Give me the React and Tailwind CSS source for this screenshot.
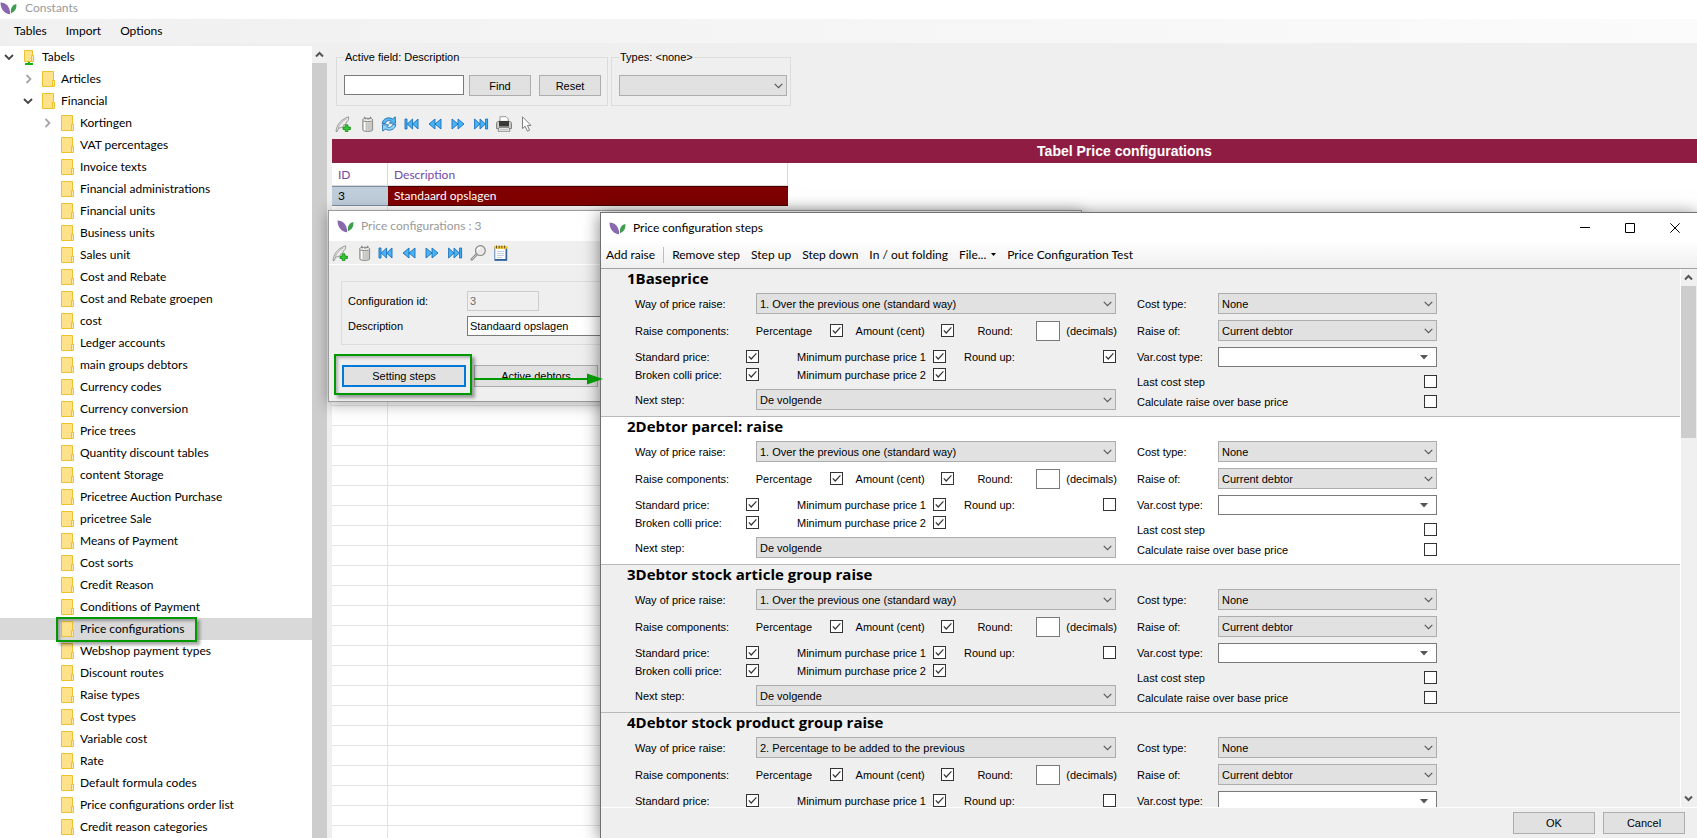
import { useState } from "react";

const FINANCIAL = [
  "Kortingen",
  "VAT percentages",
  "Invoice texts",
  "Financial administrations",
  "Financial units",
  "Business units",
  "Sales unit",
  "Cost and Rebate",
  "Cost and Rebate groepen",
  "cost",
  "Ledger accounts",
  "main groups debtors",
  "Currency codes",
  "Currency conversion",
  "Price trees",
  "Quantity discount tables",
  "content Storage",
  "Pricetree Auction Purchase",
  "pricetree Sale",
  "Means of Payment",
  "Cost sorts",
  "Credit Reason",
  "Conditions of Payment",
  "Price configurations",
  "Webshop payment types",
  "Discount routes",
  "Raise types",
  "Cost types",
  "Variable cost",
  "Rate",
  "Default formula codes",
  "Price configurations order list",
  "Credit reason categories",
];

const STANDARD_WAY = "1. Over the previous one (standard way)";

const STEPS = [
  { title: "1Baseprice", way: STANDARD_WAY, roundUp: true, bg: "bg-[#efefef]" },
  { title: "2Debtor parcel: raise", way: STANDARD_WAY, roundUp: false, bg: "bg-white" },
  { title: "3Debtor stock article group raise", way: STANDARD_WAY, roundUp: false, bg: "bg-[#efefef]" },
  { title: "4Debtor stock product group raise", way: "2. Percentage to be added to the previous", roundUp: false, bg: "bg-[#efefef]" },
];

/* ---------- icons ---------- */

function Logo() {
  return (
    <svg width="17" height="13" viewBox="0 0 17 13" className="shrink-0" aria-hidden="true">
      <path d="M0.5 0.5C6 0.8 10.2 4.5 10.2 12.3C4.5 11.8 0.6 7.5 0.5 0.5Z" fill="#8a68ae" />
      <path d="M16.3 2C12.4 3 10.2 5.8 11 11.2C14.7 9.8 16.9 6.8 16.3 2Z" fill="#3f9d4f" />
    </svg>
  );
}

function Folder() {
  return (
    <svg width="13" height="16" viewBox="0 0 13 16" aria-hidden="true">
      <path d="M0.5 0.5H11.5V9.5H12.5V15.5H0.5Z" fill="#ffe18a" stroke="#eac32f" />
      <path d="M10.5 15V9.5H12.5V15" fill="#ffe9a6" stroke="#eac32f" />
    </svg>
  );
}

function RootFolder() {
  return (
    <svg width="13" height="17" viewBox="0 0 13 17" aria-hidden="true">
      <path d="M1.5 1.5H9.5V6.5H10.5V12.5H1.5Z" fill="#ffe18a" stroke="#eac32f" />
      <path d="M8.5 12V6.5H10.5V12" fill="#ffe9a6" stroke="#eac32f" />
      <path d="M5 13H7V14H10V16H2V14H5Z" fill="#16b016" />
    </svg>
  );
}

function Expander({ open }) {
  return (
    <svg width="10" height="10" viewBox="0 0 10 10" fill="none" aria-hidden="true">
      {open ? (
        <path d="M1 3L5 7L9 3" stroke="#444" strokeWidth="1.8" />
      ) : (
        <path d="M3.5 1L7.5 5L3.5 9" stroke="#a6a6a6" strokeWidth="1.8" />
      )}
    </svg>
  );
}

function ScrollArrow({ down }) {
  return (
    <svg width="9" height="7" viewBox="0 0 9 7" fill="none" aria-hidden="true">
      <path d={down ? "M1 1.5L4.5 5L8 1.5" : "M1 5.5L4.5 2L8 5.5"} stroke="#555" strokeWidth="2" />
    </svg>
  );
}

function Quill() {
  return (
    <svg width="16" height="16" viewBox="0 0 16 16" aria-hidden="true">
      <path d="M1 15.5C1.6 10 4.5 4 13.5 0.8C14 3.5 13 5.5 11 6.2C11.8 6.8 11 8.4 8.5 9C9 10 7.5 11.5 3.6 12.2L2.2 15.5Z" fill="#eeeeec" stroke="#8c8c8a" strokeWidth="0.9" />
      <path d="M3 12C5 8 8 4.5 11.5 2.8" stroke="#a2a29f" strokeWidth="0.8" fill="none" />
      <path d="M10.3 8.8H12.9V11.1H15.4V13.5H12.9V15.8H10.3V13.5H8V11.1H10.3Z" fill="#35c935" stroke="#128812" strokeWidth="0.8" />
    </svg>
  );
}

function Trash() {
  return (
    <svg width="16" height="16" viewBox="-2 0 16 16" aria-hidden="true">
      <path d="M2.8 3.5H12.6V14C12.6 15.9 2.8 15.9 2.8 14Z" fill="#d9d9d7" stroke="#7f7f7d" strokeWidth="0.9" />
      <path d="M4.6 6V14" stroke="#fff" strokeWidth="1.2" />
      <path d="M6.8 6.5V14.4M9 6.5V14.4M11 6.3V14" stroke="#b3b3b1" strokeWidth="0.9" />
      <ellipse cx="7.7" cy="3.9" rx="5.2" ry="1.7" fill="#f0f0ee" stroke="#7f7f7d" strokeWidth="0.9" />
      <path d="M4.2 0.8L6 3.2M11.2 0.8L9.4 3.2M7 3H9" stroke="#858583" strokeWidth="1.1" />
    </svg>
  );
}

function Refresh() {
  return (
    <svg width="16" height="16" viewBox="0 0 16 16" aria-hidden="true">
      <path d="M1.2 7.5C1.5 2.8 7.5 0.2 11.7 3L14.2 0.8L14.6 7.2H8.4L10.2 5.2C7.8 3.8 5 5 4.4 7.5Z" fill="#57b7ee" stroke="#1c6fb5" strokeWidth="0.9" />
      <path d="M14.8 8.6C14.5 13.2 8.5 15.8 4.3 13L1.8 15.2L1.4 8.8H7.6L5.8 10.8C8.2 12.2 11 11 11.6 8.6Z" fill="#8fd3f7" stroke="#1c6fb5" strokeWidth="0.9" />
    </svg>
  );
}

const ARROW_PATHS = {
  first: "M1 3H3V13H1ZM8.6 3V13L3.2 8ZM14 3V13L8.6 8Z",
  prev: "M8 3V13L2 8ZM14 3V13L8 8Z",
  next: "M2 3V13L8 8ZM8 3V13L14 8Z",
  last: "M1.6 3V13L7 8ZM7 3V13L12.4 8ZM12.6 3H14.6V13H12.6Z",
};

function Arrows({ kind }) {
  return (
    <svg width="16" height="16" viewBox="0 0 16 16" aria-hidden="true">
      <path d={ARROW_PATHS[kind]} fill="#49b4f2" stroke="#1a6dbb" strokeWidth="0.9" strokeLinejoin="round" />
    </svg>
  );
}

function Printer() {
  return (
    <svg width="16" height="16" viewBox="0 0 16 16" aria-hidden="true">
      <path d="M4 6V0.7H10L12.3 3V6Z" fill="#fff" stroke="#909090" strokeWidth="0.9" />
      <path d="M0.6 12.6V7.4C0.6 6.2 1.6 5.4 2.8 5.4H13.2C14.4 5.4 15.4 6.2 15.4 7.4V12.6Z" fill="#cfcfcd" stroke="#6a6a68" strokeWidth="0.9" />
      <rect x="3" y="5" width="10" height="5.5" fill="#3a3a3a" />
      <path d="M3 11.5H13L14 15.3H2Z" fill="#f2f2f0" stroke="#777" strokeWidth="0.8" />
      <path d="M4 13.3H12" stroke="#aaa" strokeWidth="0.8" />
    </svg>
  );
}

function Pointer() {
  return (
    <svg width="16" height="16" viewBox="0 0 16 16" aria-hidden="true">
      <path d="M3.5 0.8V12.6L6.2 10.2L8.4 15.2L10.6 14.2L8.4 9.4H12Z" fill="#fff" stroke="#7e7e7e" strokeWidth="1" />
    </svg>
  );
}

function Magnifier() {
  return (
    <svg width="16" height="16" viewBox="0 0 16 16" aria-hidden="true">
      <path d="M7 9L1.8 14.4" stroke="#8a8a88" strokeWidth="2.6" strokeLinecap="round" />
      <path d="M6.8 9.4L2.2 14" stroke="#dededc" strokeWidth="0.9" strokeLinecap="round" />
      <circle cx="10.4" cy="5.6" r="4.9" fill="#e9e9e7" stroke="#8a8a88" strokeWidth="1.2" />
      <path d="M7.4 5.4C7.6 3.8 9 2.7 10.6 2.8" stroke="#fff" strokeWidth="1.2" fill="none" />
    </svg>
  );
}

function Notebook() {
  return (
    <svg width="16" height="16" viewBox="0 0 16 16" aria-hidden="true">
      <rect x="1.8" y="2" width="12" height="13.4" fill="#fff" stroke="#5f86b8" strokeWidth="1" />
      <path d="M13.2 3V14.8H2" stroke="#2e5c96" strokeWidth="1.4" fill="none" />
      <rect x="1.4" y="1.2" width="12.8" height="2.6" fill="#f4c928" />
      <path d="M3.5 0.5V3.4M6.2 0.5V3.4M8.9 0.5V3.4M11.6 0.5V3.4" stroke="#6b520c" strokeWidth="1" />
      <path d="M4 6.5H11M4 8.5H11M4 10.5H11M4 12.5H9" stroke="#b9c9dd" strokeWidth="0.9" />
    </svg>
  );
}

/* ---------- controls ---------- */

function Check({ id, on }) {
  return (
    <span className="grid size-[13px] shrink-0">
      <input
        id={id}
        type="checkbox"
        defaultChecked={on}
        className="peer size-[13px] appearance-none border border-[#333] bg-white [grid-area:1/1]"
      />
      <svg
        viewBox="0 0 13 13"
        fill="none"
        className="pointer-events-none hidden size-[13px] [grid-area:1/1] peer-checked:block"
        aria-hidden="true"
      >
        <path d="M2.8 6.4L5.2 9L10.4 3.4" stroke="#333" strokeWidth="1.2" />
      </svg>
    </span>
  );
}

function Drop({ id, value, label, className }) {
  return (
    <span className={`grid h-[21px] items-center ${className}`}>
      <select
        id={id}
        aria-label={label}
        className="h-[21px] w-full appearance-none border border-[#adadad] bg-[#e1e1e1] pr-5 pl-[3px] text-[11px] leading-4 [grid-area:1/1]"
      >
        <option>{value}</option>
      </select>
      <svg
        width="9"
        height="6"
        viewBox="0 0 9 6"
        fill="none"
        className="pointer-events-none mr-1 justify-self-end [grid-area:1/1]"
        aria-hidden="true"
      >
        <path d="M0.7 0.8L4.5 4.6L8.3 0.8" stroke="#555" strokeWidth="1.1" />
      </svg>
    </span>
  );
}

function PushButton({ children, className }) {
  return (
    <button type="button" className={`border border-[#adadad] bg-[#e1e1e1] text-center text-[11px] leading-4 ${className}`}>
      {children}
    </button>
  );
}

function IconButton({ label, children }) {
  return (
    <button type="button" aria-label={label} className="size-4">
      {children}
    </button>
  );
}

function NavButtons() {
  return (
    <>
      <IconButton label="First"><Arrows kind="first" /></IconButton>
      <IconButton label="Previous"><Arrows kind="prev" /></IconButton>
      <IconButton label="Next"><Arrows kind="next" /></IconButton>
      <IconButton label="Last"><Arrows kind="last" /></IconButton>
    </>
  );
}

/* ---------- tree ---------- */

function TreeRow({ label, icon, expander, level, selected }) {
  const indent = ["pl-0", "pl-[19px]", "pl-[38px]"][level];
  return (
    <div className={`relative flex h-[22px] items-center ${indent} ${selected ? "bg-[#d9d9d9]" : ""}`}>
      <span className="flex w-[18px] justify-center">
        {expander && (
          <button type="button" aria-label={`Toggle ${label}`}>
            <Expander open={expander === "open"} />
          </button>
        )}
      </span>
      <span className="ml-[5px] w-[13px]">{icon || <Folder />}</span>
      <span className="ml-[6px] whitespace-nowrap">{label}</span>
      {selected && (
        <span className="absolute -top-px left-14 z-10 h-[25px] w-[141px] border-2 border-[#009a00] shadow-[3px_3px_3px_rgba(0,0,0,0.35),inset_2px_2px_3px_rgba(0,0,0,0.3)]" />
      )}
    </div>
  );
}

function Tree() {
  return (
    <nav aria-label="Tables" className="flex w-[327px] shrink-0 bg-white">
      <ul className="min-w-0 flex-1">
        <li>
          <TreeRow label="Tabels" level={0} expander="open" icon={<RootFolder />} />
          <ul>
            <li>
              <TreeRow label="Articles" level={1} expander="closed" />
            </li>
            <li>
              <TreeRow label="Financial" level={1} expander="open" />
              <ul>
                {FINANCIAL.map((name, i) => (
                  <li key={name}>
                    <TreeRow
                      label={name}
                      level={2}
                      expander={i === 0 ? "closed" : undefined}
                      selected={name === "Price configurations"}
                    />
                  </li>
                ))}
              </ul>
            </li>
          </ul>
        </li>
      </ul>
      <div className="flex w-[15px] flex-col bg-[#f0f0f0]">
        <span className="flex h-[17px] items-center justify-center">
          <ScrollArrow />
        </span>
        <span className="flex-1 bg-[#cdcdcd]" />
      </div>
    </nav>
  );
}

/* ---------- main panel ---------- */

function SearchBar() {
  return (
    <div className="flex gap-[3px] pt-[6px] pl-[4px] font-['Liberation_Sans',sans-serif] text-[11px] leading-4">
      <fieldset className="flex border border-[#dcdcdc] pt-[10px] pr-[6px] pb-[9px] pl-[7px]">
        <legend className="px-px">Active field: Description</legend>
        <input aria-label="Description" type="text" className="h-5 w-[120px] border border-[#7a7a7a] bg-white px-1" />
        <PushButton className="ml-[5px] h-[21px] w-[62px]">Find</PushButton>
        <PushButton className="ml-2 h-[21px] w-[62px]">Reset</PushButton>
      </fieldset>
      <fieldset className="border border-[#dcdcdc] pt-[10px] pr-[3px] pb-[9px] pl-[7px]">
        <legend className="px-px">Types: &lt;none&gt;</legend>
        <Drop label="Types" value="" className="w-[168px]" />
      </fieldset>
    </div>
  );
}

function RecordsTable() {
  return (
    <div className="min-h-0 flex-1 overflow-hidden bg-white">
      <table className="w-[456px] table-fixed border-separate border-spacing-0">
        <thead>
          <tr className="h-[23px] text-left text-[#7648a8]">
            <th className="w-14 border-r border-b border-[#d8d8d8] pt-[2px] pl-[6px] font-normal">ID</th>
            <th className="border-r border-b border-[#d8d8d8] pt-[2px] pl-[6px] font-normal">Description</th>
          </tr>
        </thead>
        <tbody>
          <tr className="h-5">
            <td className="border-y border-[#7d8fa0] bg-[#bfccda] pl-[6px]">3</td>
            <td className="border-y border-[#4a0000] bg-[#800000] pl-[6px] text-white">Standaard opslagen</td>
          </tr>
          {Array.from({ length: 34 }, (_, i) => (
            <tr key={i} className="h-5">
              <td className="border-r border-b border-[#e4e4e4]" />
              <td className="border-b border-[#e4e4e4]" />
            </tr>
          ))}
        </tbody>
      </table>
    </div>
  );
}

/* ---------- windows ---------- */

function ConfigurationWindow() {
  return (
    <section
      aria-label="Price configurations : 3"
      className="absolute top-[210px] left-[328px] w-[754px] border border-[#9b9b9b] bg-[#efefef] shadow-[0_2px_14px_rgba(0,0,0,0.35)]"
    >
      <header className="flex h-[30px] items-center gap-[7px] bg-white pl-2 text-[#999999]">
        <Logo />
        <h2>Price configurations : 3</h2>
      </header>
      <div className="flex h-6 items-center gap-[7px] border-b border-white pl-[3px]">
        <IconButton label="Add"><Quill /></IconButton>
        <IconButton label="Delete"><Trash /></IconButton>
        <NavButtons />
        <IconButton label="Search"><Magnifier /></IconButton>
        <IconButton label="Notes"><Notebook /></IconButton>
      </div>
      <form className="pt-4 pr-3 pb-[14px] pl-3 font-['Liberation_Sans',sans-serif] text-[11px] leading-4">
        <div className="flex flex-col gap-[5px] border border-[#dcdcdc] pt-[9px] pb-2 pl-[6px]">
          <div className="flex items-center">
            <label htmlFor="cfg-id" className="w-[119px]">Configuration id:</label>
            <input id="cfg-id" disabled defaultValue="3" className="h-5 w-[72px] border border-[#cccccc] bg-[#efefef] px-[2px] text-[#6d6d6d]" />
          </div>
          <div className="flex items-center">
            <label htmlFor="cfg-desc" className="w-[119px]">Description</label>
            <input id="cfg-desc" defaultValue="Standaard opslagen" className="h-5 w-[300px] border border-[#7a7a7a] bg-white px-[2px]" />
          </div>
        </div>
        <div className="relative mt-5 flex gap-2 pl-px">
          <button type="button" className="h-[22px] w-[124px] border-2 border-[#0078d7] bg-[#e1e1e1] text-center">
            Setting steps
          </button>
          <PushButton className="h-[22px] w-[124px]">Active debtors</PushButton>
          <span className="pointer-events-none absolute -top-[11px] -left-[7px] h-[41px] w-[138px] border-2 border-[#009a00] shadow-[3px_3px_3px_rgba(0,0,0,0.35),inset_2px_2px_3px_rgba(0,0,0,0.25)]" />
        </div>
      </form>
    </section>
  );
}

function StepPanel({ step, index }) {
  const id = (name) => `step${index}-${name}`;
  return (
    <article className={`flex shrink-0 gap-5 border-b border-[#b9b9b9] pb-[6px] pl-[34px] ${step.bg}`}>
      <div className="w-[482px] shrink-0">
        <h3 className="-ml-2 h-6 font-['Open_Sans',sans-serif] text-[15px] leading-[18px] font-bold whitespace-nowrap">{step.title}</h3>
        <div className="flex h-[21px] items-center">
          <label htmlFor={id("way")} className="w-[121px]">Way of price raise:</label>
          <Drop id={id("way")} value={step.way} className="w-[360px]" />
        </div>
        <div className="mt-[6px] flex h-[21px] items-center">
          <span className="w-[121px]">Raise components:</span>
          <label htmlFor={id("pct")} className="w-[74px]">Percentage</label>
          <Check id={id("pct")} on />
          <label htmlFor={id("amt")} className="ml-[13px] w-[86px]">Amount (cent)</label>
          <Check id={id("amt")} on />
          <label htmlFor={id("rnd")} className="ml-[23px] w-[59px]">Round:</label>
          <input id={id("rnd")} type="text" className="h-5 w-6 border border-[#7a7a7a] bg-white" />
          <span className="ml-[6px]">(decimals)</span>
        </div>
        <div className="mt-2 flex h-[15px] items-center">
          <label htmlFor={id("std")} className="w-[111px]">Standard price:</label>
          <Check id={id("std")} on />
          <label htmlFor={id("min1")} className="ml-[38px] w-[136px]">Minimum purchase price 1</label>
          <Check id={id("min1")} on />
          <label htmlFor={id("up")} className="ml-[18px] w-[139px]">Round up:</label>
          <Check id={id("up")} on={step.roundUp} />
        </div>
        <div className="mt-[3px] flex h-[15px] items-center">
          <label htmlFor={id("brk")} className="w-[111px]">Broken colli price:</label>
          <Check id={id("brk")} on />
          <label htmlFor={id("min2")} className="ml-[38px] w-[136px]">Minimum purchase price 2</label>
          <Check id={id("min2")} on />
        </div>
        <div className="mt-[7px] flex h-[21px] items-center">
          <label htmlFor={id("next")} className="w-[121px]">Next step:</label>
          <Drop id={id("next")} value="De volgende" className="w-[360px]" />
        </div>
      </div>
      <div className="w-[300px] shrink-0 pt-6">
        <div className="flex h-[21px] items-center">
          <label htmlFor={id("cost")} className="w-[81px]">Cost type:</label>
          <Drop id={id("cost")} value="None" className="w-[219px]" />
        </div>
        <div className="mt-[6px] flex h-[21px] items-center">
          <label htmlFor={id("of")} className="w-[81px]">Raise of:</label>
          <Drop id={id("of")} value="Current debtor" className="w-[219px]" />
        </div>
        <div className="mt-[6px] flex h-5 items-center">
          <label htmlFor={id("var")} className="w-[81px]">Var.cost type:</label>
          <span className="grid w-[219px] items-center">
            <select id={id("var")} className="h-5 w-full appearance-none border border-[#7a7a7a] bg-white [grid-area:1/1]" />
            <svg width="8" height="5" viewBox="0 0 8 5" className="pointer-events-none mr-[9px] justify-self-end [grid-area:1/1]" aria-hidden="true">
              <path d="M0 0H8L4 4.6Z" fill="#555" />
            </svg>
          </span>
        </div>
        <div className="mt-[7px] flex h-[15px] items-center justify-between">
          <label htmlFor={id("last")}>Last cost step</label>
          <Check id={id("last")} />
        </div>
        <div className="mt-[5px] flex h-[15px] items-center justify-between">
          <label htmlFor={id("calc")}>Calculate raise over base price</label>
          <Check id={id("calc")} />
        </div>
      </div>
    </article>
  );
}

function StepsWindow() {
  return (
    <section
      aria-label="Price configuration steps"
      className="absolute top-[212px] right-0 bottom-0 left-[600px] flex flex-col border-t border-l border-[#707070] bg-[#efefef] shadow-[0_2px_16px_rgba(0,0,0,0.5)]"
    >
      <header className="flex h-[30px] shrink-0 items-center bg-white pl-2">
        <Logo />
        <h2 className="ml-[7px] flex-1">Price configuration steps</h2>
        <button type="button" aria-label="Minimize" className="flex h-full w-[45px] items-center justify-center">
          <svg width="10" height="10" viewBox="0 0 10 10"><path d="M0 4.5H10" stroke="#000" /></svg>
        </button>
        <button type="button" aria-label="Maximize" className="flex h-full w-[45px] items-center justify-center">
          <svg width="10" height="10" viewBox="0 0 10 10"><path d="M0.5 0.5H9.5V9.5H0.5Z" fill="none" stroke="#000" /></svg>
        </button>
        <button type="button" aria-label="Close" className="flex h-full w-[45px] items-center justify-center">
          <svg width="10" height="10" viewBox="0 0 10 10"><path d="M0.3 0.3L9.7 9.7M9.7 0.3L0.3 9.7" stroke="#000" /></svg>
        </button>
      </header>
      <div className="flex h-[26px] shrink-0 items-center gap-[11px] border-b border-[#a0a0a0] bg-gradient-to-b from-[#fdfdfd] to-[#f0f0f0] pb-[2px] pl-[5px] whitespace-nowrap">
        <button type="button">Add raise</button>
        <span className="-mx-[3px] h-4 w-px bg-[#bdbdbd]" />
        <button type="button">Remove step</button>
        <button type="button">Step up</button>
        <button type="button">Step down</button>
        <button type="button">In / out folding</button>
        <button type="button" className="flex items-center gap-[5px]">
          File...
          <svg width="5" height="3" viewBox="0 0 5 3" aria-hidden="true"><path d="M0 0H5L2.5 3Z" fill="#000" /></svg>
        </button>
        <button type="button">Price Configuration Test</button>
      </div>
      <div className="flex min-h-0 flex-1 border-b border-white">
        <div className="flex min-w-0 flex-1 flex-col overflow-hidden border-r border-white font-['Liberation_Sans',sans-serif] text-[11px] leading-4">
          {STEPS.map((step, i) => (
            <StepPanel key={step.title} step={step} index={i + 1} />
          ))}
        </div>
        <div className="mr-px flex w-[15px] flex-col items-center bg-[#f0f0f0]">
          <span className="flex h-[17px] items-center"><ScrollArrow /></span>
          <span className="h-[152px] w-full bg-[#cdcdcd]" />
          <span className="mt-auto flex h-[17px] items-center"><ScrollArrow down /></span>
        </div>
      </div>
      <footer className="flex h-[30px] shrink-0 items-start justify-end gap-2 pt-1 pr-3 font-['Liberation_Sans',sans-serif]">
        <PushButton className="h-[22px] w-[82px]">OK</PushButton>
        <PushButton className="h-[22px] w-[82px]">Cancel</PushButton>
      </footer>
    </section>
  );
}

export default function App() {
  const [menu] = useState(["Tables", "Import", "Options"]);
  return (
    <div className="relative flex h-screen flex-col overflow-hidden bg-[#efefef] font-['Lato','Open_Sans',sans-serif] text-[12px] leading-4 text-black">
      <header className="flex h-[19px] shrink-0 items-center gap-2 bg-white pb-[3px] text-[#999999]">
        <Logo />
        <h1>Constants</h1>
      </header>
      <nav aria-label="Menu" className="flex h-6 shrink-0 items-center gap-[19px] bg-gradient-to-r from-[#f0f0f0] to-[#fbfbfb] pl-[14px]">
        {menu.map((item) => (
          <button key={item} type="button">{item}</button>
        ))}
      </nav>
      <div className="flex min-h-0 flex-1">
        <div className="flex shrink-0 pt-[3px]">
          <Tree />
        </div>
        <main className="ml-[5px] flex min-w-0 flex-1 flex-col">
          <SearchBar />
          <div className="flex h-[33px] shrink-0 items-center gap-[7px] pt-[2px] pl-[3px]">
            <IconButton label="Add"><Quill /></IconButton>
            <IconButton label="Delete"><Trash /></IconButton>
            <IconButton label="Refresh"><Refresh /></IconButton>
            <NavButtons />
            <IconButton label="Print"><Printer /></IconButton>
            <IconButton label="Select"><Pointer /></IconButton>
          </div>
          <h2 className="flex h-6 shrink-0 items-center justify-center bg-[#8f1d43] pl-[220px] font-['Liberation_Sans',sans-serif] text-[14px] font-bold text-white">
            Tabel Price configurations
          </h2>
          <RecordsTable />
        </main>
      </div>
      <ConfigurationWindow />
      <StepsWindow />
      <svg width="129" height="12" viewBox="0 0 129 12" className="pointer-events-none absolute top-[373px] left-[474px]" aria-hidden="true">
        <path d="M0 6H114" stroke="#009a00" strokeWidth="2" />
        <path d="M113 0.5L129 6L113 11.5Z" fill="#009a00" />
      </svg>
    </div>
  );
}
